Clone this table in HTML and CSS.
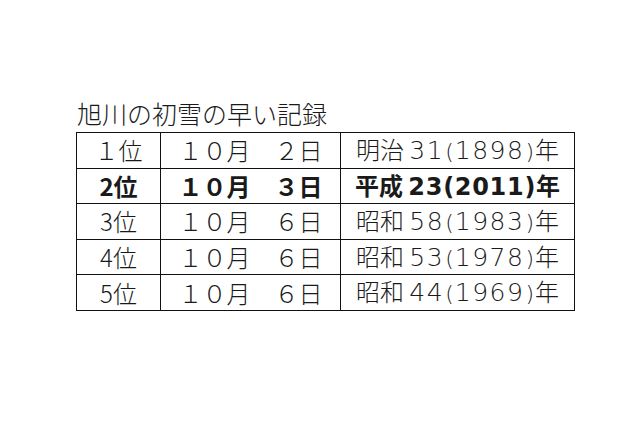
FILE: index.html
```html
<!DOCTYPE html>
<html lang="ja">
<head>
<meta charset="utf-8">
<link rel="stylesheet" href="styles.css">
</head>
<body>
<div class="wrap">
  <div class="title">旭川の初雪の早い記録</div>
  <table class="rec">
    <tr><td class="c1">１位</td><td class="c2">１０月　２日</td><td class="c3">明治 <span class="num">31</span><span class="par">(</span><span class="num">1898</span><span class="par">)</span>年</td></tr>
    <tr class="bold"><td class="c1">2位</td><td class="c2">１０月　３日</td><td class="c3">平成 <span class="bnum">23(2011)</span>年</td></tr>
    <tr><td class="c1">3位</td><td class="c2">１０月　６日</td><td class="c3">昭和 <span class="num">58</span><span class="par">(</span><span class="num">1983</span><span class="par">)</span>年</td></tr>
    <tr><td class="c1">4位</td><td class="c2">１０月　６日</td><td class="c3">昭和 <span class="num">53</span><span class="par">(</span><span class="num">1978</span><span class="par">)</span>年</td></tr>
    <tr><td class="c1">5位</td><td class="c2">１０月　６日</td><td class="c3">昭和 <span class="num">44</span><span class="par">(</span><span class="num">1969</span><span class="par">)</span>年</td></tr>
  </table>
</div>
</body>
</html>
```
FILE: styles.css
```css
html, body {
  margin: 0;
  padding: 0;
  background: #fff;
}
.wrap {
  padding: 97px 0 0 76px;
  font-family: "Noto Sans CJK JP", "Noto Sans", sans-serif;
  color: #1a1a1a;
  font-weight: 300;
}
.title {
  font-size: 25px;
  line-height: 32px;
  height: 35px;
  padding-left: 1px;
}
.rec {
  border-collapse: collapse;
  width: 495px;
  font-size: 24px;
  table-layout: fixed;
}
.rec td {
  border: 1.4px solid #111;
  height: 34.6px;
  padding: 0;
  text-align: center;
  line-height: 30px;
  white-space: nowrap;
}
.rec .c1 { width: 83px; }
.rec .c2 { width: 179px; }
.rec .c3 { width: 233px; }
.rec .num {
  font-family: "DejaVu Sans", sans-serif;
  font-size: 25px;
  letter-spacing: 1.5px;
}
.rec .par {
  font-family: "DejaVu Sans", sans-serif;
  font-size: 22px;
  margin: 0 1px;
}
.rec .bnum {
  font-family: "DejaVu Sans", sans-serif;
  font-size: 24px;
  letter-spacing: 0.7px;
}
.rec .bold td { font-weight: bold; }
```
